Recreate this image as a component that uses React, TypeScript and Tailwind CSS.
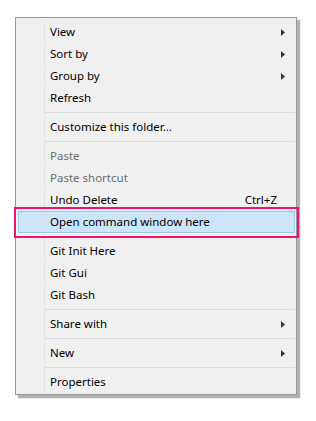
type Item = {
  label: string;
  sub?: boolean;
  disabled?: boolean;
  shortcut?: string;
  active?: boolean;
};

const groups: Item[][] = [
  [
    { label: "View", sub: true },
    { label: "Sort by", sub: true },
    { label: "Group by", sub: true },
    { label: "Refresh" },
  ],
  [{ label: "Customize this folder..." }],
  [
    { label: "Paste", disabled: true },
    { label: "Paste shortcut", disabled: true },
    { label: "Undo Delete", shortcut: "Ctrl+Z" },
    { label: "Open command window here", active: true },
  ],
  [{ label: "Git Init Here" }, { label: "Git Gui" }, { label: "Git Bash" }],
  [{ label: "Share with", sub: true }],
  [{ label: "New", sub: true }],
  [{ label: "Properties" }],
];

function Arrow() {
  return (
    <svg width="4" height="7" viewBox="0 0 4 7" className="block">
      <path d="M0 0 L4 3.5 L0 7 Z" fill="#333333" />
    </svg>
  );
}

function Row({ item }: { item: Item }) {
  return (
    <div
      className={
        "ml-[2px] mr-[1px] flex h-[22px] items-center border " +
        (item.active ? "border-[#99c7ee] bg-[#cce4f7]" : "border-transparent")
      }
    >
      <div className="h-full w-[26px] shrink-0 border-r border-[#e2e2e2]" />
      <span
        className={
          "flex-1 pl-[5px] leading-none " +
          (item.disabled ? "text-[#6d6d6d]" : "text-black")
        }
      >
        {item.label}
      </span>
      {item.shortcut && <span className="mr-[17px] leading-none">{item.shortcut}</span>}
      {item.sub && (
        <span className="mr-[9px]">
          <Arrow />
        </span>
      )}
    </div>
  );
}

function Separator() {
  return (
    <div className="ml-[3px] mr-[1px] flex h-[7px]">
      <div className="h-full w-[26px] shrink-0 border-r border-[#e2e2e2]" />
      <div className="flex-1 pt-[3px]">
        <div className="h-px bg-[#dcdcdc]" />
      </div>
    </div>
  );
}

export default function App() {
  return (
    <div
      className="h-[421px] w-[316px] bg-white pl-[15px] pt-[17px]"
      style={{ fontFamily: '"Noto Sans", "Open Sans", sans-serif' }}
    >
      <div className="relative w-[282px] border border-[#979797] bg-[#f0f0f0] pt-[3px] pb-[1px] text-[11.5px] shadow-[3px_3px_1px_rgba(0,0,0,0.3)]">
        {groups.map((g, gi) => (
          <div key={gi}>
            {gi > 0 && <Separator />}
            {g.map((it) => (
              <Row key={it.label} item={it} />
            ))}
          </div>
        ))}
        <div className="pointer-events-none absolute left-[-2px] top-[189px] h-[31px] w-[285px] border-2 border-[#f0136b]" />
      </div>
    </div>
  );
}
